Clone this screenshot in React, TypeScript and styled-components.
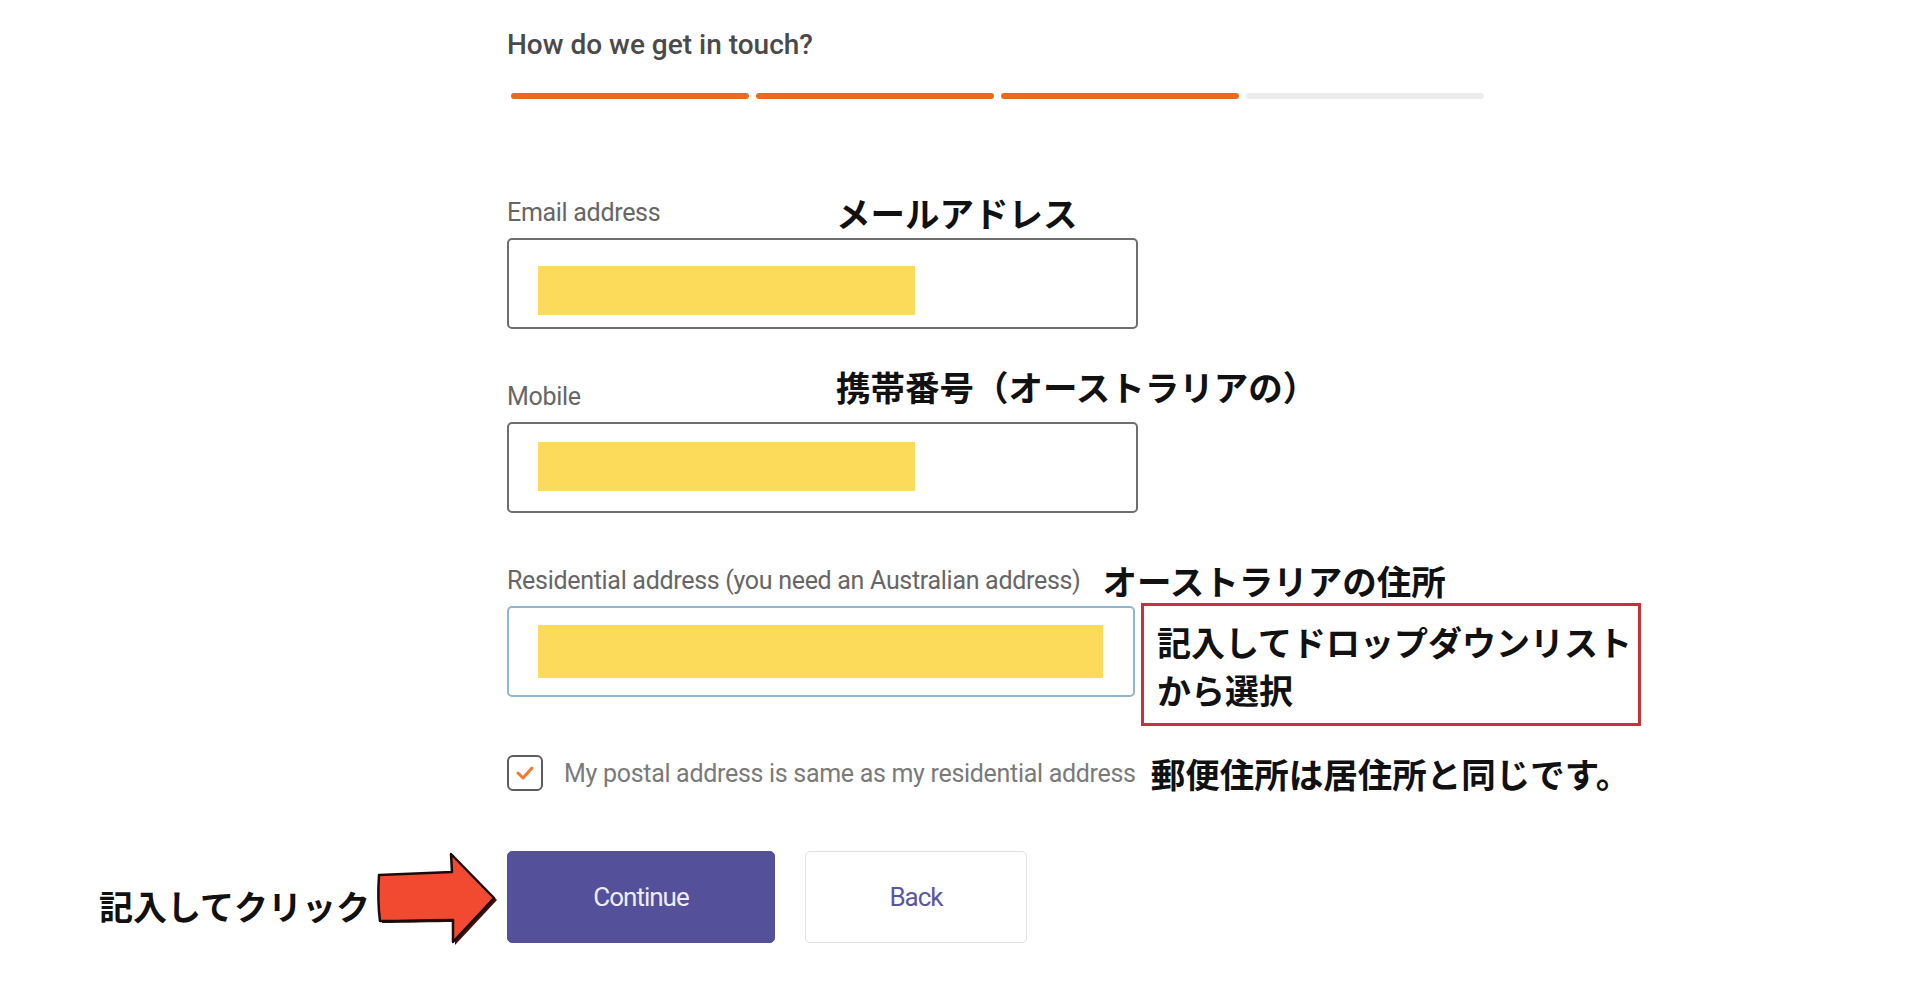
import React from 'react';
import styled, { createGlobalStyle } from 'styled-components';

const GlobalStyle = createGlobalStyle`
  body {
    margin: 0;
    background: #ffffff;
    font-family: 'Roboto', 'Liberation Sans', sans-serif;
  }
`;

const steps = [true, true, true, false];

export default function App() {
  return (
    <>
      <GlobalStyle />
      <Page>
        <Heading>How do we get in touch?</Heading>
        <Progress>
          {steps.map((done, i) => (
            <Step key={i} $done={done} />
          ))}
        </Progress>

        <Field $gap={88}>
          <LabelRow>
            <Label>Email address</Label>
            <Note>メールアドレス</Note>
          </LabelRow>
          <InputBox $width={631}>
            <Fill $width={377} $top={26} $height={49} />
          </InputBox>
        </Field>

        <Field $gap={42}>
          <LabelRow>
            <Label>Mobile</Label>
            <Note $lift={10}>携帯番号（オーストラリアの）</Note>
          </LabelRow>
          <InputBox $width={631}>
            <Fill $width={377} $top={18} $height={49} />
          </InputBox>
        </Field>

        <Field $gap={42}>
          <LabelRow>
            <Label>Residential address (you need an Australian address)</Label>
            <Note>オーストラリアの住所</Note>
          </LabelRow>
          <AddressRow>
            <InputBox $width={628} $focused>
              <Fill $width={565} $top={17} $height={53} />
            </InputBox>
            <Callout>
              記入してドロップダウンリスト
              <br />
              から選択
            </Callout>
          </AddressRow>
        </Field>

        <CheckRow>
          <CheckBox>
            <svg width="22" height="18" viewBox="0 0 22 18">
              <polyline
                points="4,9 9,14 18,4"
                fill="none"
                stroke="#ef7b2e"
                strokeWidth="3"
                strokeLinecap="round"
                strokeLinejoin="round"
              />
            </svg>
          </CheckBox>
          <CheckText>My postal address is same as my residential address</CheckText>
          <Note>郵便住所は居住所と同じです。</Note>
        </CheckRow>

        <Hint>
          <HintText>記入してクリック</HintText>
          <svg width="122" height="96" viewBox="0 0 122 96">
            {/* dark edge behind the arrow */}
            <path
              d="M5 27 C 30 26, 55 25, 78 24 L 77 6 L 121 50 L 79 95 L 79 72 C 56 72, 30 73, 6 73 Z"
              fill="#3a1410"
            />
            <path
              d="M3 25 C 30 24, 55 23, 76 22 L 75 4 L 118 48 L 77 92 L 77 70 C 55 70, 30 71, 4 71 C 2 56, 2 40, 3 25 Z"
              fill="#f24a31"
              stroke="#1a0c0a"
              strokeWidth="2.5"
              strokeLinejoin="round"
            />
          </svg>
        </Hint>
        <Actions>
          <Button $primary>Continue</Button>
          <Button>Back</Button>
        </Actions>
      </Page>
    </>
  );
}

const Page = styled.main`
  display: grid;
  grid-template-columns: 507px 1fr;
  align-items: start;
  padding-top: 25px;

  & > * {
    grid-column: 2;
  }
`;

const Heading = styled.h1`
  margin: 0;
  font-size: 28px;
  line-height: 40px;
  font-weight: 500;
  color: #4a4a4a;
`;

const Progress = styled.div`
  display: grid;
  grid-template-columns: repeat(4, 238px);
  gap: 7px;
  margin: 28px 0 0 4px;
`;

const Step = styled.div<{ $done: boolean }>`
  height: 6px;
  border-radius: 3px;
  background: ${(p) => (p.$done ? '#ec6a1c' : '#ececec')};
`;

const Field = styled.div<{ $gap: number }>`
  margin-top: ${(p) => p.$gap}px;
`;

const LabelRow = styled.div`
  display: flex;
  align-items: center;
  gap: 22px;
  height: 50px;
  margin-bottom: 1px;
`;

const Label = styled.span`
  min-width: 307px;
  font-size: 25px;
  letter-spacing: -0.3px;
  color: #666666;
`;

const Note = styled.span<{ $lift?: number }>`
  font-family: 'Noto Sans CJK JP', sans-serif;
  font-size: 34.5px;
  line-height: 40px;
  font-weight: 700;
  color: #111111;
  white-space: nowrap;
  margin-bottom: ${(p) => (p.$lift ? p.$lift * 2 : 0)}px;
`;

const InputBox = styled.div<{ $width: number; $focused?: boolean }>`
  box-sizing: border-box;
  width: ${(p) => p.$width}px;
  height: 91px;
  padding-left: 29px;
  border: 2px solid ${(p) => (p.$focused ? '#8fb4d6' : '#6e6e6e')};
  border-radius: 5px;
  background: #ffffff;
`;

const Fill = styled.div<{ $width: number; $top: number; $height: number }>`
  width: ${(p) => p.$width}px;
  height: ${(p) => p.$height}px;
  margin-top: ${(p) => p.$top}px;
  background: #fddb5a;
`;

const AddressRow = styled.div`
  display: flex;
  align-items: flex-start;
  gap: 6px;
`;

const Callout = styled.div`
  box-sizing: border-box;
  width: 500px;
  height: 123px;
  margin-top: -3px;
  padding: 12px 0 0 13px;
  border: 3px solid #c8313b;
  font-family: 'Noto Sans CJK JP', sans-serif;
  font-size: 34px;
  font-weight: 700;
  line-height: 48px;
  color: #111111;
  white-space: nowrap;
`;

const CheckRow = styled.div`
  display: flex;
  align-items: center;
  margin-top: 27px;

  ${Note} {
    margin-left: 15px;
  }
`;

const CheckBox = styled.span`
  box-sizing: border-box;
  display: flex;
  align-items: center;
  justify-content: center;
  width: 36px;
  height: 36px;
  border: 2px solid #5c5c5c;
  border-radius: 6px;
  margin-right: 21px;
`;

const CheckText = styled.span`
  font-size: 25px;
  letter-spacing: -0.3px;
  color: #7a7a7a;
`;

const Hint = styled.div`
  grid-column: 1;
  display: flex;
  align-items: center;
  justify-content: flex-end;
  gap: 6px;
  padding-right: 9px;
  margin-top: 57px;
`;

const HintText = styled.span`
  font-family: 'Noto Sans CJK JP', sans-serif;
  font-size: 34px;
  font-weight: 700;
  color: #111111;
  margin-top: 14px;
`;

const Actions = styled.div`
  display: flex;
  gap: 30px;
  margin-top: 58px;
`;

const Button = styled.button<{ $primary?: boolean }>`
  box-sizing: border-box;
  width: ${(p) => (p.$primary ? 268 : 222)}px;
  height: 92px;
  border-radius: 5px;
  border: 1px solid ${(p) => (p.$primary ? '#54509a' : '#e1e1e1')};
  background: ${(p) => (p.$primary ? '#54509a' : '#ffffff')};
  color: ${(p) => (p.$primary ? '#eeecf9' : '#5a579c')};
  font-family: 'Roboto', 'Liberation Sans', sans-serif;
  font-size: 26px;
  letter-spacing: -1px;
  cursor: pointer;
`;
